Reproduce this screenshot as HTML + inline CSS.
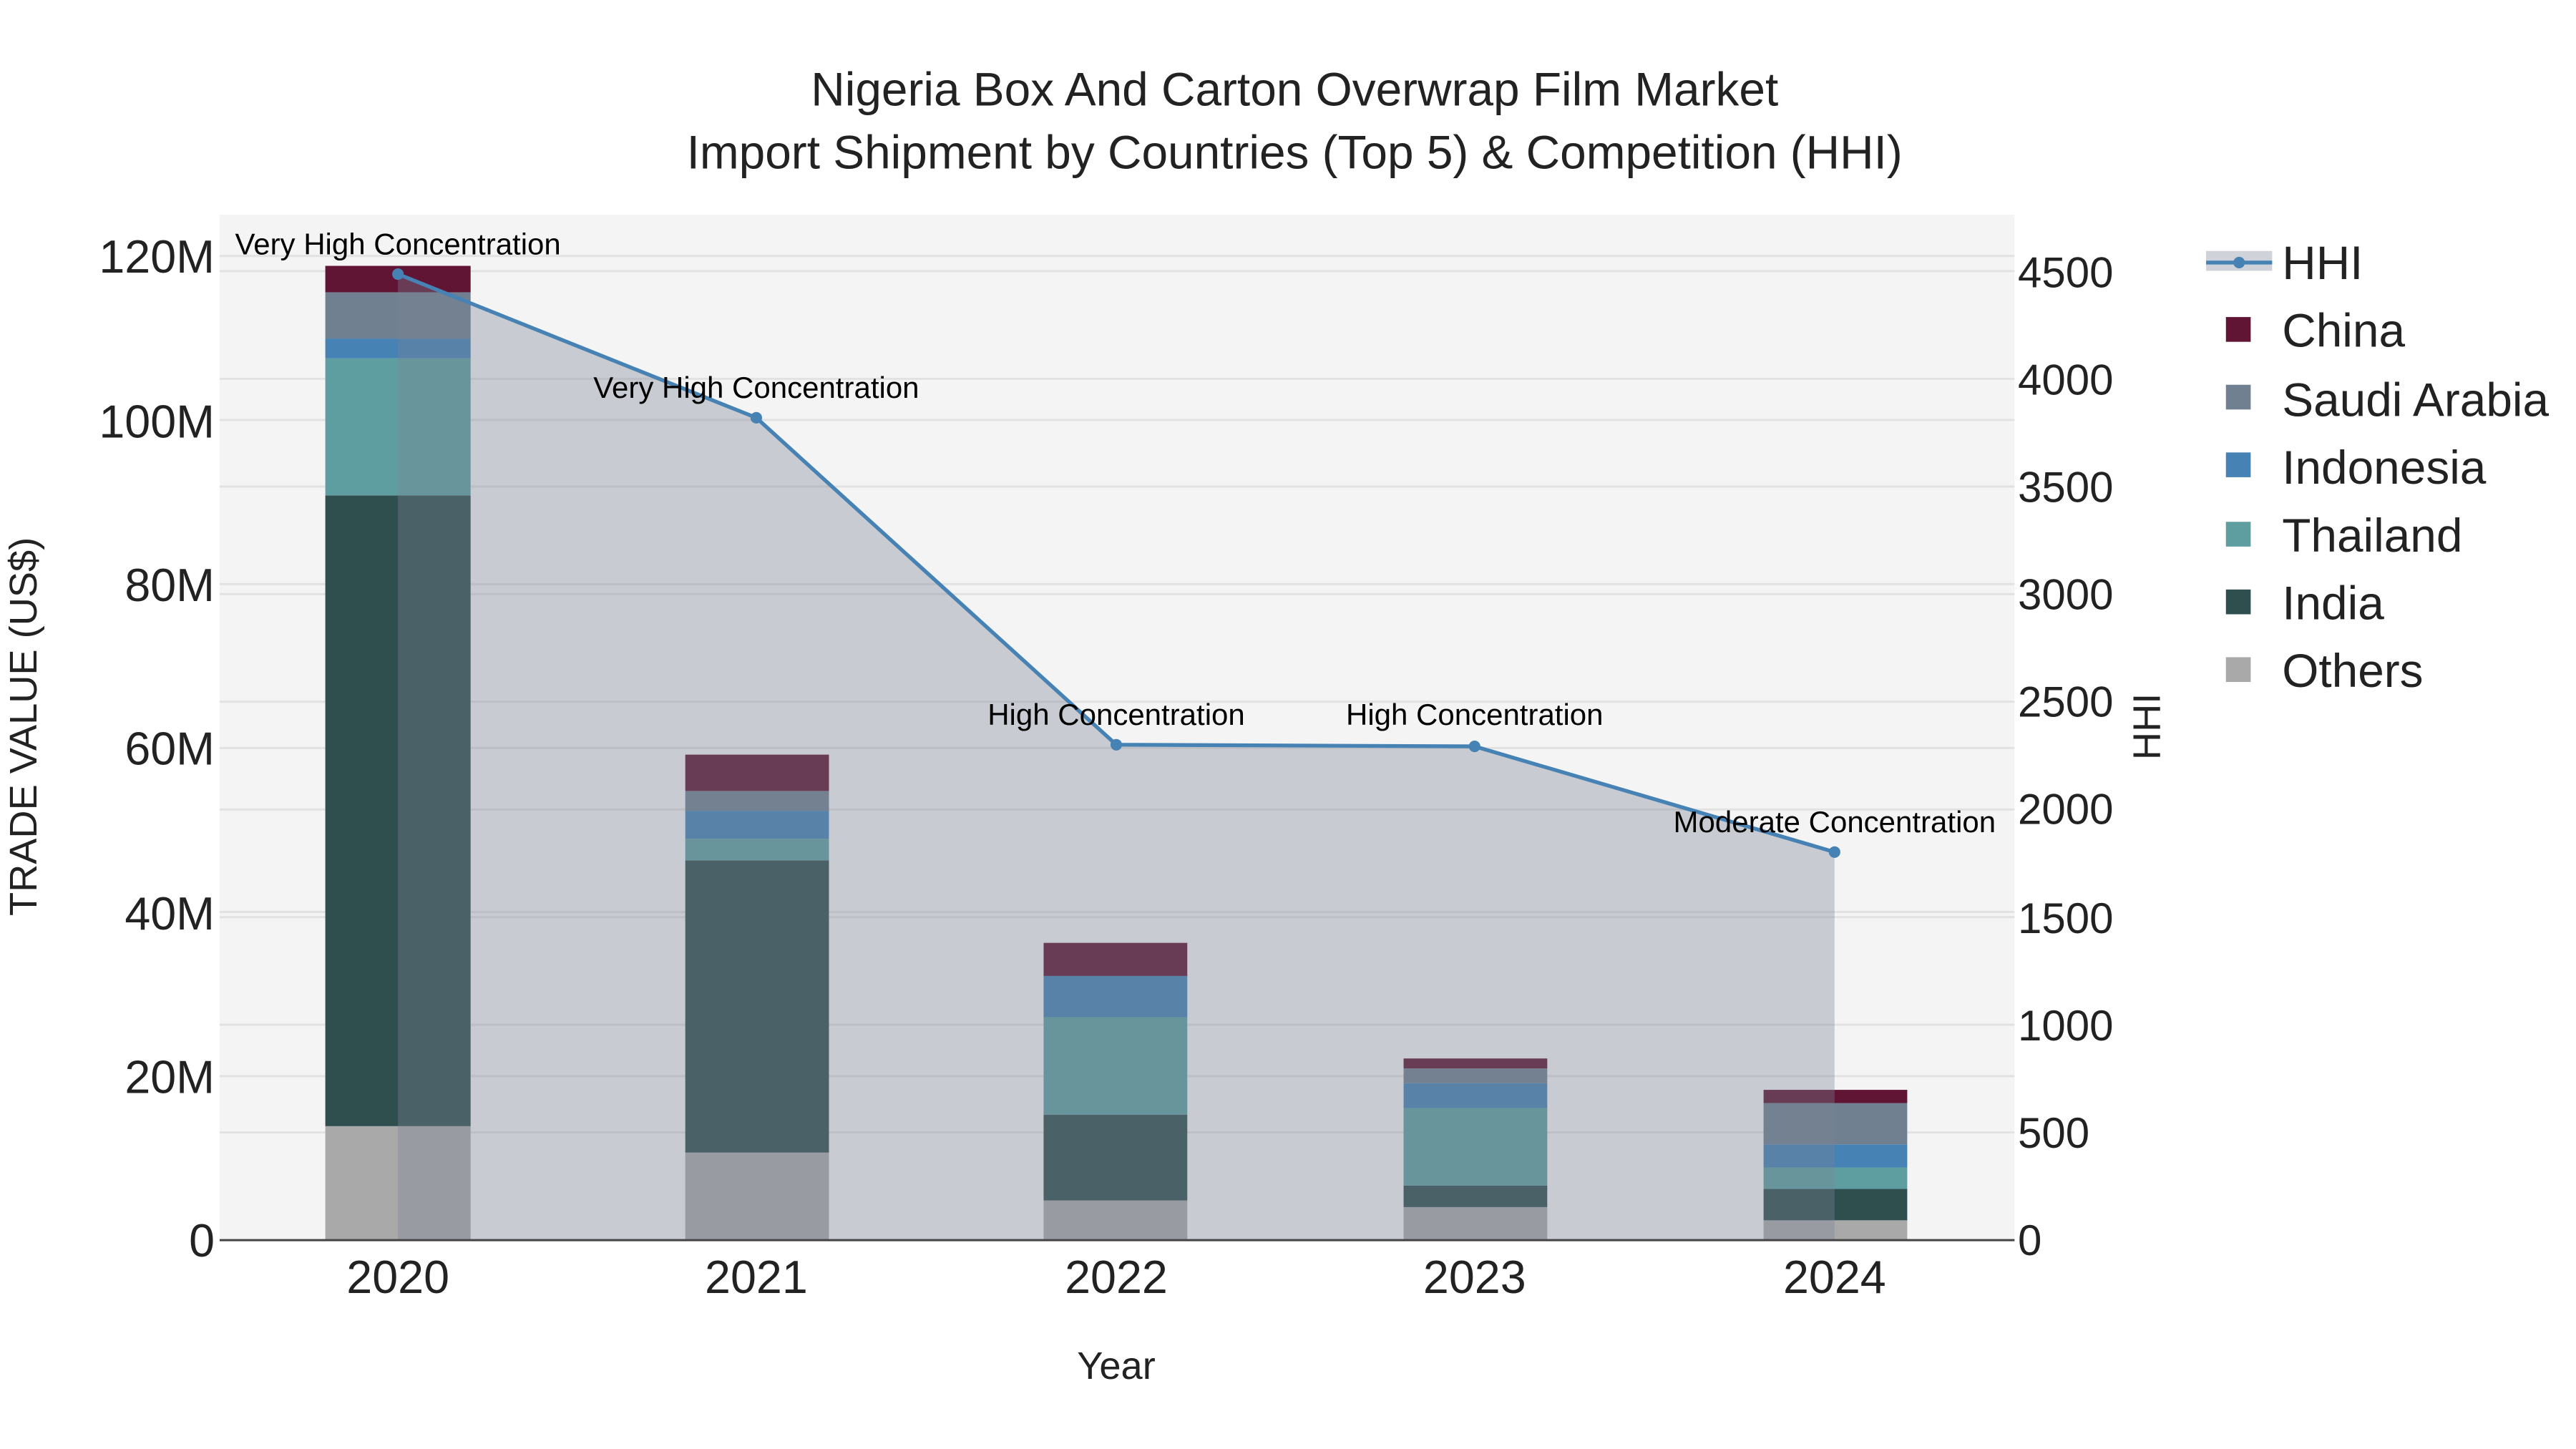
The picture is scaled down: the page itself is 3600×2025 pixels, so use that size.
<!DOCTYPE html>
<html><head><meta charset="utf-8"><style>
html,body{margin:0;padding:0;background:#fff;}
svg{display:block;font-family:"Liberation Sans",sans-serif;}
</style></head><body>
<svg width="3600" height="2025" viewBox="0 0 1560 877.5" xmlns="http://www.w3.org/2000/svg">
<rect x="0" y="0" width="1560" height="877.5" fill="#fff"/>
<rect x="133" y="130" width="1087" height="621" fill="#f4f4f4"/>
<g stroke="#e2e2e2" stroke-width="1.3">
<line x1="133" x2="1220" y1="651.7" y2="651.7"/><line x1="133" x2="1220" y1="552.3" y2="552.3"/>
<line x1="133" x2="1220" y1="453" y2="453"/><line x1="133" x2="1220" y1="353.7" y2="353.7"/>
<line x1="133" x2="1220" y1="254.3" y2="254.3"/><line x1="133" x2="1220" y1="155" y2="155"/>
<line x1="133" x2="1220" y1="685.8" y2="685.8"/><line x1="133" x2="1220" y1="620.6" y2="620.6"/>
<line x1="133" x2="1220" y1="555.4" y2="555.4"/><line x1="133" x2="1220" y1="490.2" y2="490.2"/>
<line x1="133" x2="1220" y1="425" y2="425"/><line x1="133" x2="1220" y1="359.8" y2="359.8"/>
<line x1="133" x2="1220" y1="294.6" y2="294.6"/><line x1="133" x2="1220" y1="229.4" y2="229.4"/>
<line x1="133" x2="1220" y1="164.2" y2="164.2"/>
</g>
<g>
<rect x="197" y="682" width="88" height="69" fill="#a9a9a9"/>
<rect x="197" y="300" width="88" height="382" fill="#2f4f4f"/>
<rect x="197" y="217" width="88" height="83" fill="#5f9ea0"/>
<rect x="197" y="205" width="88" height="12" fill="#4682b4"/>
<rect x="197" y="177" width="88" height="28" fill="#708090"/>
<rect x="197" y="161" width="88" height="16" fill="#601535"/>

<rect x="415" y="698" width="87" height="53" fill="#a9a9a9"/>
<rect x="415" y="521" width="87" height="177" fill="#2f4f4f"/>
<rect x="415" y="508" width="87" height="13" fill="#5f9ea0"/>
<rect x="415" y="491" width="87" height="17" fill="#4682b4"/>
<rect x="415" y="479" width="87" height="12" fill="#708090"/>
<rect x="415" y="457" width="87" height="22" fill="#601535"/>

<rect x="632" y="727" width="87" height="24" fill="#a9a9a9"/>
<rect x="632" y="675" width="87" height="52" fill="#2f4f4f"/>
<rect x="632" y="616" width="87" height="59" fill="#5f9ea0"/>
<rect x="632" y="591" width="87" height="25" fill="#4682b4"/>
<rect x="632" y="590" width="87" height="1" fill="#708090"/>
<rect x="632" y="571" width="87" height="20" fill="#601535"/>

<rect x="850" y="731" width="87" height="20" fill="#a9a9a9"/>
<rect x="850" y="718" width="87" height="13" fill="#2f4f4f"/>
<rect x="850" y="671" width="87" height="47" fill="#5f9ea0"/>
<rect x="850" y="656" width="87" height="15" fill="#4682b4"/>
<rect x="850" y="647" width="87" height="9" fill="#708090"/>
<rect x="850" y="641" width="87" height="6" fill="#601535"/>

<rect x="1068" y="739" width="87" height="12" fill="#a9a9a9"/>
<rect x="1068" y="720" width="87" height="19" fill="#2f4f4f"/>
<rect x="1068" y="707" width="87" height="13" fill="#5f9ea0"/>
<rect x="1068" y="693" width="87" height="14" fill="#4682b4"/>
<rect x="1068" y="668" width="87" height="25" fill="#708090"/>
<rect x="1068" y="660" width="87" height="8" fill="#601535"/>
</g>
<polygon points="241,166 458,253 676,451 893,452 1111,516 1111,751 241,751" fill="rgb(121,131,147)" fill-opacity="0.36"/>
<polyline points="241,166 458,253 676,451 893,452 1111,516" fill="none" stroke="#4682b4" stroke-width="2.3"/>
<g fill="#4682b4"><circle cx="241" cy="166" r="3.5"/><circle cx="458" cy="253" r="3.5"/><circle cx="676" cy="451" r="3.5"/><circle cx="893" cy="452" r="3.5"/><circle cx="1111" cy="516" r="3.5"/></g>
<line x1="133" x2="1220" y1="751" y2="751" stroke="#444" stroke-width="1.3"/>
<g font-size="18.2" text-anchor="middle" fill="#000">
<text x="241" y="154">Very High Concentration</text>
<text x="458" y="241">Very High Concentration</text>
<text x="676" y="439">High Concentration</text>
<text x="893" y="439">High Concentration</text>
<text x="1111" y="504">Moderate Concentration</text>
</g>
<g font-size="28.5" text-anchor="middle" fill="#222">
<text x="784" y="64">Nigeria Box And Carton Overwrap Film Market</text>
<text x="784" y="102">Import Shipment by Countries (Top 5) &amp; Competition (HHI)</text>
</g>
<g font-size="28" text-anchor="end" fill="#222">
<text x="130" y="761">0</text><text x="130" y="662">20M</text><text x="130" y="563">40M</text>
<text x="130" y="463">60M</text><text x="130" y="364">80M</text><text x="130" y="265">100M</text><text x="130" y="165">120M</text>
</g>
<g font-size="26" fill="#222">
<text x="1222" y="760">0</text><text x="1222" y="695">500</text><text x="1222" y="630">1000</text>
<text x="1222" y="565">1500</text><text x="1222" y="499">2000</text><text x="1222" y="434">2500</text>
<text x="1222" y="369">3000</text><text x="1222" y="304">3500</text><text x="1222" y="239">4000</text><text x="1222" y="174">4500</text>
</g>
<g font-size="28" text-anchor="middle" fill="#222">
<text x="241" y="783">2020</text><text x="458" y="783">2021</text><text x="676" y="783">2022</text><text x="893" y="783">2023</text><text x="1111" y="783">2024</text>
</g>
<text x="676" y="835" font-size="23.5" text-anchor="middle" fill="#222">Year</text>
<text transform="translate(22,440) rotate(-90)" font-size="23.5" text-anchor="middle" fill="#222">TRADE VALUE (US$)</text>
<text transform="translate(1308,440) rotate(-90)" font-size="23.5" text-anchor="middle" fill="#222">HHI</text>
<rect x="1336" y="152" width="40" height="12" fill="rgb(121,131,147)" fill-opacity="0.36"/>
<line x1="1336" x2="1376" y1="159" y2="159" stroke="#4682b4" stroke-width="2.3"/>
<circle cx="1356" cy="159" r="3.5" fill="#4682b4"/>
<rect x="1348" y="192" width="15" height="15" fill="#601535"/>
<rect x="1348" y="233" width="15" height="15" fill="#708090"/>
<rect x="1348" y="274" width="15" height="15" fill="#4682b4"/>
<rect x="1348" y="316" width="15" height="15" fill="#5f9ea0"/>
<rect x="1348" y="357" width="15" height="15" fill="#2f4f4f"/>
<rect x="1348" y="398" width="15" height="15" fill="#a9a9a9"/>
<g font-size="28.5" fill="#222">
<text x="1382" y="169">HHI</text><text x="1382" y="210">China</text><text x="1382" y="252">Saudi Arabia</text>
<text x="1382" y="293">Indonesia</text><text x="1382" y="334">Thailand</text><text x="1382" y="375">India</text><text x="1382" y="416">Others</text>
</g>
</svg>
</body></html>
